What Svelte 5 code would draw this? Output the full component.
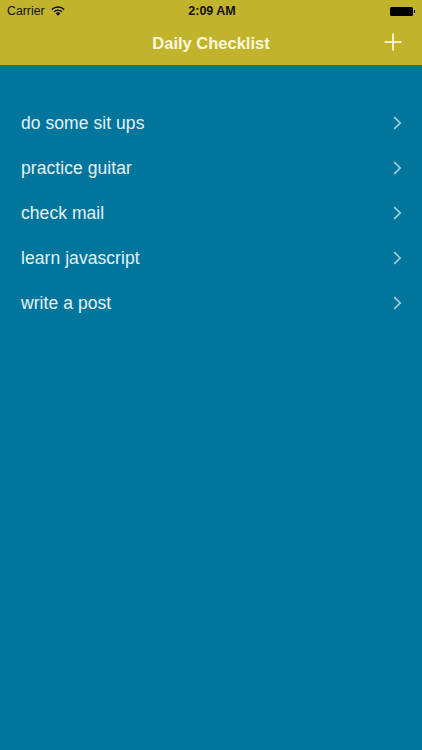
<script>
  const items = ['do some sit ups', 'practice guitar', 'check mail', 'learn javascript', 'write a post'];
</script>

<div class="screen">
  <header class="top">
    <div class="status">
      <div class="carrier">
        <span>Carrier</span>
        <svg width="14" height="10" viewBox="0 0 14 10" aria-hidden="true">
          <path d="M0.800 3.600a8.800 8.800 0 0 1 12.400 0" fill="none" stroke="#111" stroke-width="1.500"/>
          <path d="M3 5.800a5.700 5.700 0 0 1 8 0" fill="none" stroke="#111" stroke-width="1.500"/>
          <path d="M7 9.800 4.700 7.500a3.200 3.200 0 0 1 4.600 0z" fill="#111"/>
        </svg>
      </div>
      <div class="time">2:09 AM</div>
      <div class="battery"><i class="cell"></i><i class="nub"></i></div>
    </div>
    <div class="nav">
      <h1>Daily Checklist</h1>
      <svg class="plus" width="18" height="18" viewBox="0 0 18 18" aria-hidden="true">
        <path d="M9 0.500v17M0.500 9h17" stroke="#fff" stroke-width="1.500" fill="none"/>
      </svg>
    </div>
  </header>

  <ul class="list">
    {#each items as item}
      <li>
        <span>{item}</span>
        <svg width="9" height="14" viewBox="0 0 9 14" aria-hidden="true">
          <path d="M1.200 1.200 7.200 7l-6 5.800" fill="none" stroke="#a8d0df" stroke-width="1.600"/>
        </svg>
      </li>
    {/each}
  </ul>
</div>

<style>
  :global(body) {
    margin: 0;
    background: #01759c;
  }
  .screen {
    width: 422px;
    height: 750px;
    overflow: hidden;
    display: flex;
    flex-direction: column;
    background: #01759c;
    font-family: "Liberation Sans", Arial, sans-serif;
  }
  .top {
    height: 65px;
    flex: none;
    background: #c1b42c;
  }
  .status {
    height: 22px;
    display: grid;
    grid-template-columns: 1fr auto 1fr;
    align-items: center;
    padding: 0 7px;
    font-size: 12.300px;
    color: #111;
  }
  .carrier {
    display: flex;
    align-items: center;
    gap: 6px;
  }
  .time {
    font-weight: 700;
    font-size: 12.500px;
    padding-left: 2px;
  }
  .battery {
    display: flex;
    justify-content: flex-end;
    align-items: center;
  }
  .cell {
    display: block;
    width: 23px;
    height: 9px;
    border-radius: 1.500px;
    background: #000;
  }
  .nub {
    display: block;
    width: 1.500px;
    height: 3px;
    margin-left: 0.500px;
    background: #000;
  }
  .nav {
    height: 43px;
    position: relative;
    display: flex;
    align-items: center;
    justify-content: center;
  }
  h1 {
    margin: 0;
    font-size: 16.500px;
    font-weight: 700;
    color: #fbf8dc;
  }
  .plus {
    position: absolute;
    right: 20px;
    top: 11px;
  }
  .list {
    list-style: none;
    margin: 0;
    padding: 36px 20px 0 21px;
  }
  li {
    height: 45px;
    display: flex;
    align-items: center;
    justify-content: space-between;
    font-size: 17.500px;
    letter-spacing: 0.060px;
    color: #e4f3f7;
  }
  li svg {
    margin-bottom: 2px;
  }
</style>
